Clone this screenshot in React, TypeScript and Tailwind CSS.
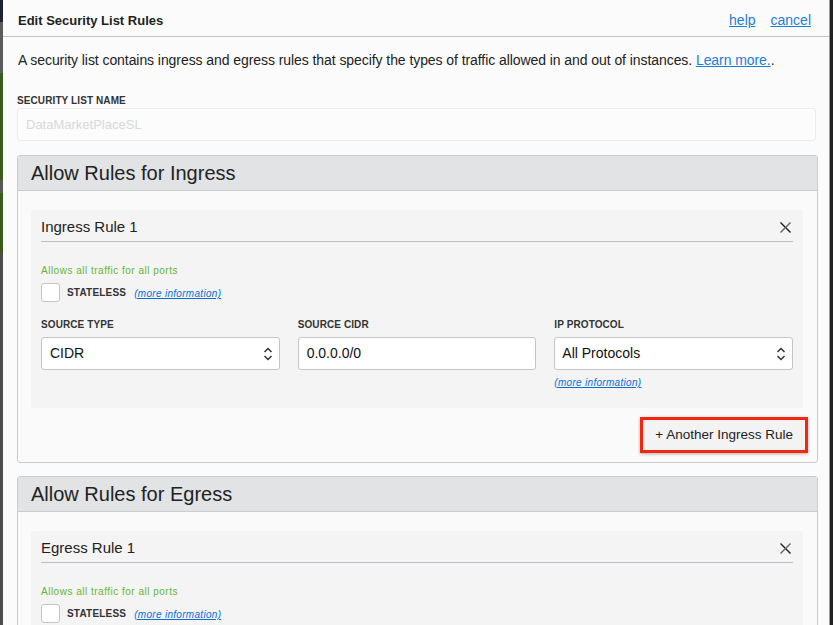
import React from "react";

const font = { fontFamily: "'Liberation Sans', Arial, sans-serif" };

function UpDown() {
  return (
    <svg width="10" height="16" viewBox="0 0 10 16" fill="none" stroke="#333" strokeWidth="1.5">
      <path d="M1.5 6 L5 2.5 L8.5 6" />
      <path d="M1.5 10 L5 13.5 L8.5 10" />
    </svg>
  );
}

function CloseX() {
  return (
    <svg width="13" height="13" viewBox="0 0 13 13" fill="none" strokeWidth="1.4">
      <path d="M1.5 1.5 L11.5 11.5" stroke="#222" />
      <path d="M11.5 1.5 L1.5 11.5" stroke="#666" />
    </svg>
  );
}

function Label({ children }: { children: React.ReactNode }) {
  return (
    <div className="text-[10px] font-bold uppercase tracking-[0.01em] text-[#333] leading-none">
      {children}
    </div>
  );
}

function MoreInfo() {
  return (
    <span className="text-[10px] italic text-[#0a6ed6] underline leading-none tracking-[0.03em]">(more information)</span>
  );
}

function RuleCard({ title, full }: { title: string; full: boolean }) {
  return (
    <div className="ml-[13px] mr-[14px] mt-[19px] rounded-[2px] bg-[#f4f4f4] px-[10px] pt-[7px] pb-[19px]">
      <div className="flex items-center justify-between border-b border-[#b9bec4] pb-[4px]">
        <span className="text-[15px] text-[#222] leading-[20px]">{title}</span>
        <span className="mr-[1px]">
          <CloseX />
        </span>
      </div>
      <div className="mt-[24px] text-[10px] text-[#67b52f] leading-none tracking-[0.05em]">Allows all traffic for all ports</div>
      <div className="mt-[4px] flex items-center gap-[7px]">
        <div className="h-[19px] w-[19px] rounded-[3px] border border-[#c4c4c4] bg-white" />
        <span className="text-[10px] font-bold text-[#333] tracking-[0.02em]">STATELESS</span>
        <span className="ml-[1px]">
          <MoreInfo />
        </span>
      </div>
      {full && (
        <div className="mt-[16px] grid grid-cols-3 gap-[18px]">
          <div>
            <Label>Source Type</Label>
            <div className="mt-[7px] flex h-[33px] items-center justify-between rounded-[3px] border border-[#c2c6cb] bg-white pl-[8px] pr-[6px] text-[14px] text-[#111]">
              <span>CIDR</span>
              <UpDown />
            </div>
          </div>
          <div>
            <Label>Source CIDR</Label>
            <div className="mt-[7px] flex h-[33px] items-center rounded-[3px] border border-[#c2c6cb] bg-white pl-[8px] text-[14px] text-[#111]">
              0.0.0.0/0
            </div>
          </div>
          <div>
            <Label>IP Protocol</Label>
            <div className="mt-[7px] flex h-[33px] items-center justify-between rounded-[3px] border border-[#c2c6cb] bg-white pl-[7px] pr-[6px] text-[14px] text-[#111]">
              <span>All Protocols</span>
              <UpDown />
            </div>
            <div className="mt-[3px] leading-none">
              <MoreInfo />
            </div>
          </div>
        </div>
      )}
    </div>
  );
}

function Section({ title, children }: { title: string; children: React.ReactNode }) {
  return (
    <div className="ml-[14px] mr-[11px] rounded-[3px] border border-[#c9cbce] bg-[#fafafa]">
      <div className="flex h-[35px] items-center border-b border-[#c9cbce] bg-[#e1e3e5] px-[13px] text-[20px] text-[#222]">
        {title}
      </div>
      {children}
    </div>
  );
}

export default function App() {
  return (
    <div className="flex h-[625px] w-[833px] overflow-hidden bg-[#444]" style={font}>
      {/* left backdrop strip */}
      <div className="flex w-[3px] flex-col">
        <div className="h-[22px] bg-[#1d2431]" />
        <div className="h-[51px] bg-[#5b5b5b]" />
        <div className="h-[107px] bg-[#3c5a1c]" />
        <div className="h-[13px] bg-[#585858]" />
        <div className="h-[60px] bg-[#3c5a1c]" />
        <div className="flex-1 bg-[#4d4d4d]" />
      </div>

      {/* modal */}
      <div className="flex flex-1 flex-col bg-[#fbfbfb]">
        <div className="flex h-[37px] shrink-0 items-center justify-between border-b border-[#c3c7cc] pt-[5px] pl-[15px] pr-[18px]">
          <span className="text-[13px] font-bold text-[#222]">Edit Security List Rules</span>
          <div className="flex gap-[15px] text-[14px] text-[#1d7ed8]">
            <span className="underline">help</span>
            <span className="underline">cancel</span>
          </div>
        </div>

        <p className="mt-[14px] pl-[15px] text-[14px] text-[#222] leading-[18px] tracking-[-0.005em]">
          A security list contains ingress and egress rules that specify the types of traffic allowed in and out of
          instances. <span className="text-[#1d7ed8] underline">Learn more.</span>.
        </p>

        <div className="mt-[27px] ml-[14px] mr-[13px]">
          <Label>Security List Name</Label>
          <div className="mt-[2px] flex h-[33px] items-center rounded-[3px] border border-[#ececec] bg-[#fcfcfc] pl-[8px] text-[13px] text-[#d8d8d8]">
            DataMarketPlaceSL
          </div>
        </div>

        <div className="mt-[14px]">
          <Section title="Allow Rules for Ingress">
            <RuleCard title="Ingress Rule 1" full />
            <div className="flex justify-end pt-[9px] pr-[9px] pb-[9px]">
              <div className="border-[3px] border-[#f5260f] shadow-[0_1px_3px_rgba(0,0,0,0.3)]">
                <div className="flex h-[30px] items-center bg-[#f3f3f3] px-[12px] text-[13.5px] text-[#222]">
                  + Another Ingress Rule
                </div>
              </div>
            </div>
          </Section>
        </div>

        <div className="mt-[13px]">
          <Section title="Allow Rules for Egress">
            <RuleCard title="Egress Rule 1" full={false} />
          </Section>
        </div>
      </div>

      {/* right backdrop strip */}
      <div className="w-[4px] border-l border-[#9a9a9a] bg-[#222]" />
    </div>
  );
}
